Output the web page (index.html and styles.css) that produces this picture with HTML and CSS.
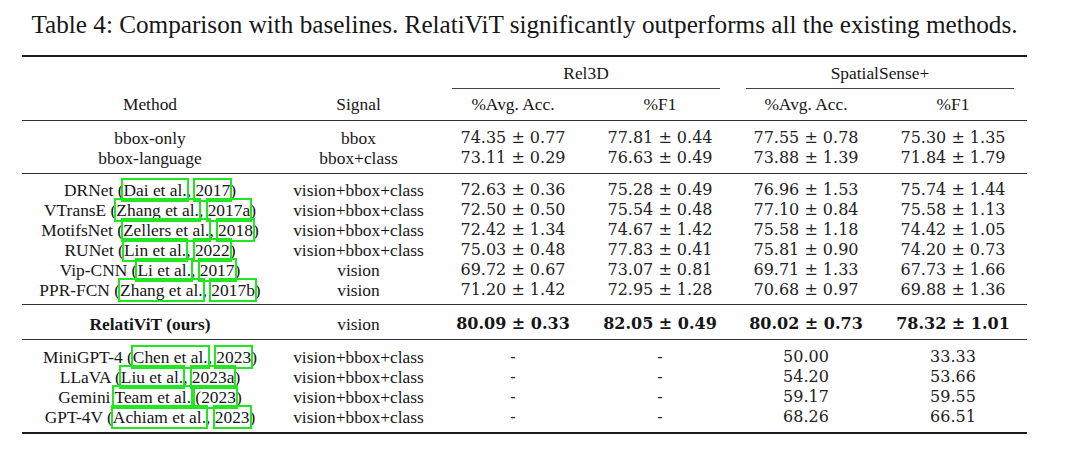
FILE: index.html
```html
<!DOCTYPE html>
<html lang="en">
<head>
<meta charset="utf-8">
<title>Table 4: Comparison with baselines</title>
<link rel="stylesheet" href="styles.css">
</head>
<body>
<div class="page">
  <p class="caption">Table 4: Comparison with baselines. RelatiViT significantly outperforms all the existing methods.</p>
  <div class="table">
    <div class="head">
      <div class="span-row">
        <div class="blank"></div>
        <div class="span"><div class="span-label">Rel3D</div><div class="cmid"></div></div>
        <div class="span"><div class="span-label">SpatialSense+</div><div class="cmid"></div></div>
      </div>
      <div class="row head2">
        <div>Method</div><div>Signal</div><div>%Avg. Acc.</div><div>%F1</div><div>%Avg. Acc.</div><div>%F1</div>
      </div>
    </div>

    <div class="group g1">
      <div class="row"><div>bbox-only</div><div>bbox</div><div class="num">74.35 ± 0.77</div><div class="num">77.81 ± 0.44</div><div class="num">77.55 ± 0.78</div><div class="num">75.30 ± 1.35</div></div>
      <div class="row"><div>bbox-language</div><div>bbox+class</div><div class="num">73.11 ± 0.29</div><div class="num">76.63 ± 0.49</div><div class="num">73.88 ± 1.39</div><div class="num">71.84 ± 1.79</div></div>
    </div>

    <div class="group g2">
      <div class="row"><div>DRNet (<span class="cite">Dai et al.</span>, <span class="cite">2017</span>)</div><div>vision+bbox+class</div><div class="num">72.63 ± 0.36</div><div class="num">75.28 ± 0.49</div><div class="num">76.96 ± 1.53</div><div class="num">75.74 ± 1.44</div></div>
      <div class="row"><div>VTransE (<span class="cite">Zhang et al.</span>, <span class="cite">2017a</span>)</div><div>vision+bbox+class</div><div class="num">72.50 ± 0.50</div><div class="num">75.54 ± 0.48</div><div class="num">77.10 ± 0.84</div><div class="num">75.58 ± 1.13</div></div>
      <div class="row"><div>MotifsNet (<span class="cite">Zellers et al.</span>, <span class="cite">2018</span>)</div><div>vision+bbox+class</div><div class="num">72.42 ± 1.34</div><div class="num">74.67 ± 1.42</div><div class="num">75.58 ± 1.18</div><div class="num">74.42 ± 1.05</div></div>
      <div class="row"><div>RUNet (<span class="cite">Lin et al.</span>, <span class="cite">2022</span>)</div><div>vision+bbox+class</div><div class="num">75.03 ± 0.48</div><div class="num">77.83 ± 0.41</div><div class="num">75.81 ± 0.90</div><div class="num">74.20 ± 0.73</div></div>
      <div class="row"><div>Vip-CNN (<span class="cite">Li et al.</span>, <span class="cite">2017</span>)</div><div>vision</div><div class="num">69.72 ± 0.67</div><div class="num">73.07 ± 0.81</div><div class="num">69.71 ± 1.33</div><div class="num">67.73 ± 1.66</div></div>
      <div class="row"><div>PPR-FCN (<span class="cite">Zhang et al.</span>, <span class="cite">2017b</span>)</div><div>vision</div><div class="num">71.20 ± 1.42</div><div class="num">72.95 ± 1.28</div><div class="num">70.68 ± 0.97</div><div class="num">69.88 ± 1.36</div></div>
    </div>

    <div class="group g3">
      <div class="row ours"><div class="bold">RelatiViT (ours)</div><div>vision</div><div class="num bold">80.09 ± 0.33</div><div class="num bold">82.05 ± 0.49</div><div class="num bold">80.02 ± 0.73</div><div class="num bold">78.32 ± 1.01</div></div>
    </div>

    <div class="group g4">
      <div class="row"><div>MiniGPT-4 (<span class="cite">Chen et al.</span>, <span class="cite">2023</span>)</div><div>vision+bbox+class</div><div class="num">-</div><div class="num">-</div><div class="num">50.00</div><div class="num">33.33</div></div>
      <div class="row"><div>LLaVA (<span class="cite">Liu et al.</span>, <span class="cite">2023a</span>)</div><div>vision+bbox+class</div><div class="num">-</div><div class="num">-</div><div class="num">54.20</div><div class="num">53.66</div></div>
      <div class="row"><div>Gemini <span class="cite">Team et al.</span> <span class="cite">(2023</span>)</div><div>vision+bbox+class</div><div class="num">-</div><div class="num">-</div><div class="num">59.17</div><div class="num">59.55</div></div>
      <div class="row"><div>GPT-4V (<span class="cite">Achiam et al.</span>, <span class="cite">2023</span>)</div><div>vision+bbox+class</div><div class="num">-</div><div class="num">-</div><div class="num">68.26</div><div class="num">66.51</div></div>
    </div>
  </div>
</div>
</body>
</html>
```

FILE: styles.css
```css
body {
  margin: 0;
  background: #ffffff;
  color: #161616;
  font-family: "Liberation Serif", "Times New Roman", serif;
}

.page {
  width: 1005px;
  padding-left: 22px;
}

.caption {
  margin: 0;
  padding-top: 10px;
  font-size: 25.2px;
  line-height: 30px;
  text-align: center;
  white-space: nowrap;
}

.table {
  margin-top: 15px;
  border-top: 2px solid #1c1c1c;
  border-bottom: 2px solid #1c1c1c;
}

.head {
  padding: 6px 0;
  border-bottom: 1px solid #333333;
}

.span-row,
.row {
  display: grid;
  grid-template-columns: 256px 161px 148px 146px 146px 148px;
  font-size: 17.4px;
  text-align: center;
  white-space: nowrap;
}

.row {
  height: 20px;
  line-height: 20px;
}

.blank,
.span {
  grid-column: span 2;
}

.span-label {
  height: 20px;
  line-height: 20px;
}

.cmid {
  margin: 5px 13px 0;
  border-top: 1px solid #444444;
}

.head2 {
  margin-top: 5px;
}

.group {
  border-bottom: 1px solid #333333;
}

.g1 { padding: 7px 0 5px; }
.g2 { padding: 6px 0 4px; }
.g3 { padding: 9px 0 5px; }
.g4 { padding: 7px 0 5px; border-bottom: none; }

.num {
  font-family: "DejaVu Serif", serif;
  font-size: 16px;
  color: #222222;
}

.bold {
  font-weight: 700;
}

.num.bold {
  color: #161616;
}

.cite {
  outline: 2px solid #22e622;
  outline-offset: -0.5px;
}
```
